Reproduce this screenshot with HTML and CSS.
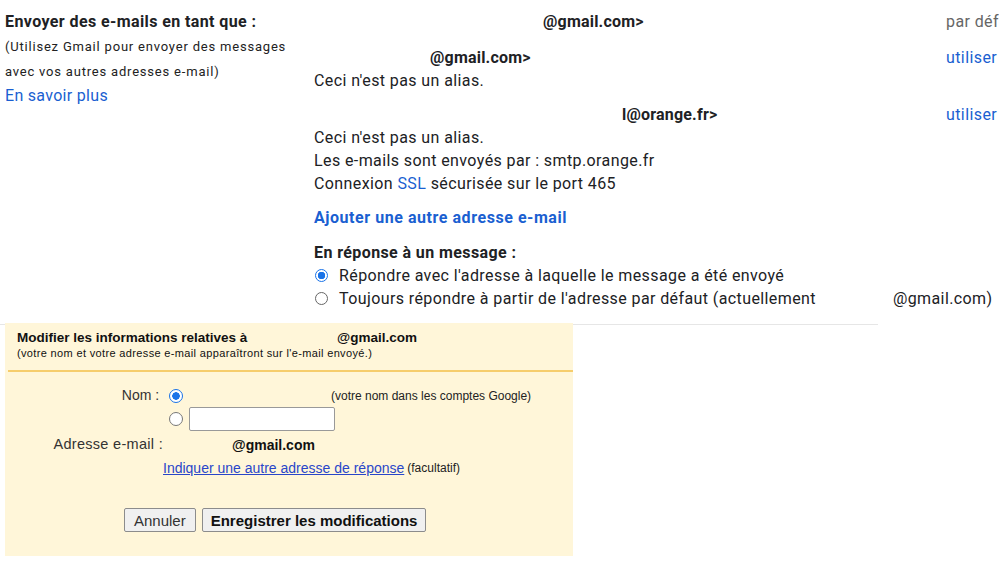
FILE: index.html
```html
<!DOCTYPE html>
<html lang="fr">
<head>
<meta charset="utf-8">
<title>Paramètres</title>
<link rel="stylesheet" href="styles.css">
</head>
<body>
<div class="settings">
  <div class="label-col">
    <div class="label-title">Envoyer des e-mails en tant que :</div>
    <div class="label-sub">(Utilisez Gmail pour envoyer des messages avec vos autres adresses e-mail)</div>
    <a class="learn" href="#">En savoir plus</a>
  </div>
  <div class="value-col">
    <div class="addr first">
      <div class="addr-main"><div class="addr-line"><span class="redact r1"></span>@gmail.com&gt;</div></div>
      <div class="addr-action muted">par défaut</div>
    </div>
    <div class="addr">
      <div class="addr-main">
        <div class="addr-line"><span class="redact r2"></span>@gmail.com&gt;</div>
        <div>Ceci n'est pas un alias.</div>
      </div>
      <div class="addr-action"><a href="#">utiliser</a></div>
    </div>
    <div class="addr">
      <div class="addr-main">
        <div class="addr-line"><span class="redact r3"></span>l@orange.fr&gt;</div>
        <div>Ceci n'est pas un alias.</div>
        <div>Les e-mails sont envoyés par : smtp.orange.fr</div>
        <div>Connexion <a href="#">SSL</a> sécurisée sur le port 465</div>
      </div>
      <div class="addr-action"><a href="#">utiliser</a></div>
    </div>
    <a class="add-link" href="#">Ajouter une autre adresse e-mail</a>
    <div class="reply-title">En réponse à un message :</div>
    <div class="radio-row"><span class="radio checked"></span>Répondre avec l'adresse à laquelle le message a été envoyé</div>
    <div class="radio-row"><span class="radio"></span>Toujours répondre à partir de l'adresse par défaut (actuellement <span class="redact r4"></span>@gmail.com)</div>
  </div>
</div>

<div class="panel">
  <div class="panel-head">
    <div class="panel-title">Modifier les informations relatives à <span class="redact r5"></span>@gmail.com</div>
    <div class="panel-sub">(votre nom et votre adresse e-mail apparaîtront sur l'e-mail envoyé.)</div>
  </div>
  <div class="panel-form">
    <div class="f-label">Nom :&nbsp;</div>
    <div class="f-value"><span class="pradio checked"></span><span class="redact r6"></span><span class="small">(votre nom dans les comptes Google)</span></div>
    <div class="f-label"></div>
    <div class="f-value"><span class="pradio"></span><span class="textbox"></span></div>
    <div class="f-label email-label">Adresse e-mail :</div>
    <div class="f-value email-value"><span class="redact r7"></span><b class="email">@gmail.com</b></div>
    <div class="f-label"></div>
    <div class="f-value link-row"><a href="#">Indiquer une autre adresse de réponse</a> <span class="small">(facultatif)</span></div>
  </div>
  <div class="buttons">
    <button class="btn" type="button">Annuler</button>
    <button class="btn bold" type="button">Enregistrer les modifications</button>
  </div>
</div>
</body>
</html>
```

FILE: styles.css
```css
html, body {
  margin: 0;
  padding: 0;
  background: #ffffff;
  overflow: hidden;
}
body {
  width: 999px;
  height: 564px;
  font-family: Roboto, "Liberation Sans", Arial, sans-serif;
  color: #202124;
}
a { color: #1a5fd1; text-decoration: none; }

.settings {
  display: flex;
  width: 878px;
  padding-top: 10px;
  padding-bottom: 14px;
  border-bottom: 1px solid #e6e6e6;
}
.label-col {
  width: 309px;
  padding-left: 5px;
  flex: none;
}
.label-title {
  font-weight: 700;
  font-size: 16px;
  letter-spacing: 0.4px;
  line-height: 23px;
}
.label-sub {
  max-width: 292px;
  font-size: 13px;
  letter-spacing: 0.8px;
  line-height: 24.5px;
  margin-top: 2px;
  color: #222;
}
.learn {
  display: block;
  font-size: 16px;
  letter-spacing: 0.3px;
  line-height: 23px;
}
.value-col {
  flex: 1;
  font-size: 16px;
  letter-spacing: 0.4px;
  line-height: 23px;
}
.addr {
  display: grid;
  grid-template-columns: 632px 200px;
  margin-bottom: 11px;
  white-space: nowrap;
}
.addr.first { margin-bottom: 13px; }
.addr-line { font-weight: 700; letter-spacing: 0.2px; }
.addr-action { white-space: nowrap; }
.muted { color: #666; }
.redact { display: inline-block; }
.r1 { width: 229px; }
.r2 { width: 116px; }
.r3 { width: 308px; }
.r4 { width: 77px; }
.r5 { width: 86px; }
.r6 { width: 142px; }
.r7 { width: 69px; }

.add-link {
  display: block;
  font-weight: 700;
  letter-spacing: 0.55px;
  margin-bottom: 12px;
}
.reply-title { font-weight: 700; }
.radio-row {
  display: flex;
  align-items: center;
  white-space: nowrap;
}
.radio {
  width: 11px;
  height: 11px;
  border: 1px solid #666;
  border-radius: 50%;
  margin: 0 11px 0 1px;
  flex: none;
  box-sizing: content-box;
}
.radio.checked {
  border-color: #1a73e8;
  background: radial-gradient(circle, #1a73e8 0 3.5px, #fff 4px);
}

.panel {
  margin: -2px 0 0 5px;
  width: 568px;
  height: 233px;
  background: #fff6d9;
  font-family: "Liberation Sans", Arial, sans-serif;
  color: #111;
}
.panel-head {
  margin-left: 3px;
  padding: 6px 0 9px 9px;
  border-bottom: 2px solid #f6cd6c;
}
.panel-title {
  font-weight: 700;
  font-size: 13.5px;
  line-height: 17px;
}
.panel-sub {
  font-size: 11px;
  letter-spacing: 0.35px;
  line-height: 15px;
}
.panel-form {
  display: grid;
  grid-template-columns: 158px 1fr;
  grid-auto-rows: auto;
  margin-top: 12px;
  font-size: 14px;
  color: #333;
}
.f-label {
  text-align: right;
  line-height: 23px;
}
.email-label {
  font-size: 14.5px;
  letter-spacing: 0.3px;
  margin-top: 2px;
}
.email-value { margin-top: 2px; }
.f-value {
  display: flex;
  align-items: center;
  min-height: 23px;
}
.pradio {
  width: 12px;
  height: 12px;
  border: 1px solid #777;
  border-radius: 50%;
  background: #fff;
  margin: 0 6px 0 6px;
  flex: none;
}
.pradio.checked {
  border-color: #1a73e8;
  background: radial-gradient(circle, #1a73e8 0 3.5px, #fff 4px);
}
.small { font-size: 12px; color: #222; }
.textbox {
  width: 144px;
  height: 22px;
  border: 1px solid #999;
  border-radius: 2px;
  background: #fff;
}
.email { color: #111; font-size: 14px; }
.link-row { min-height: 23px; }
.link-row a {
  color: #2946c9;
  text-decoration: underline;
  font-size: 14px;
  margin-right: 3px;
}
.buttons {
  display: flex;
  gap: 6px;
  margin: 29px 0 0 119px;
}
.btn {
  height: 24px;
  padding: 0 9px;
  border: 1px solid #8c8c8c;
  border-radius: 2px;
  background: #f0f0f0;
  font-family: "Liberation Sans", Arial, sans-serif;
  font-size: 15px;
  color: #333;
}
.btn.bold { font-weight: 700; color: #111; padding: 0 8px; }
```
